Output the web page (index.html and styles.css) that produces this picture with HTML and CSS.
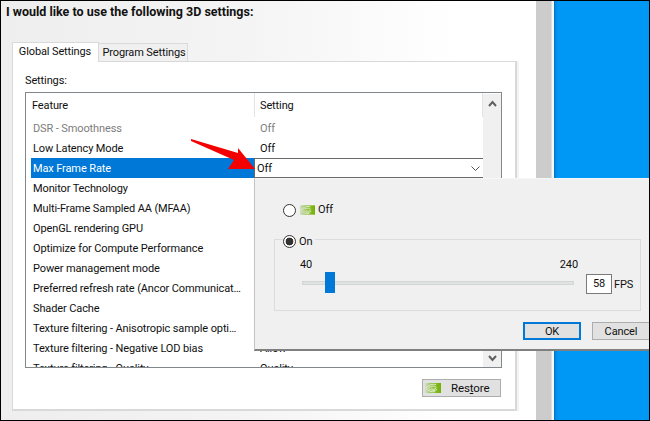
FILE: index.html
```html
<!DOCTYPE html>
<html lang="en">
<head>
<meta charset="utf-8">
<title>Manage 3D settings</title>
<link rel="stylesheet" href="styles.css">
</head>
<body>
<svg class="defs" width="0" height="0" aria-hidden="true">
  <defs>
    <linearGradient id="nv" x1="0" x2="1" y1="0" y2="0">
      <stop offset="0" stop-color="#d5dccb"/>
      <stop offset="0.35" stop-color="#9cc45a"/>
      <stop offset="1" stop-color="#74b000"/>
    </linearGradient>
    <symbol id="nvidia" viewBox="0 0 16 10">
      <rect width="16" height="10" fill="url(#nv)"/>
      <path d="M1 5.2C3.5 1.6 8 .8 11 1.6M3 5.4C5 3 8.5 2.6 10.4 3.6C11.6 4.4 10.8 6 9 6.3C7.6 6.5 6.4 5.8 6.6 4.8M1 5.4C3 8 6.5 9.4 10 8.6M4 5.8C6 7.8 10 8 12 6.4" fill="none" stroke="#e4efcf" stroke-width=".9"/>
    </symbol>
  </defs>
</svg>
<div class="stage">
  <main class="window">
    <h1 class="heading">I would like to use the following 3D settings:</h1>
    <div class="tabs">
      <div class="tab tab-active">Global Settings</div>
      <div class="tab">Program Settings</div>
    </div>
    <section class="panel">
      <div class="panel-label">Settings:</div>
      <div class="list">
        <div class="list-main">
          <div class="list-head">
            <div class="head-feature">Feature</div>
            <div class="head-setting">Setting</div>
          </div>
          <div class="rows">
            <div class="row row-muted"><span class="cell-f">DSR - Smoothness</span><span class="cell-s">Off</span></div>
            <div class="row"><span class="cell-f">Low Latency Mode</span><span class="cell-s">Off</span></div>
            <div class="row row-selected"><span class="cell-f">Max Frame Rate</span>
              <span class="combo"><span class="combo-value">Off</span>
                <svg class="combo-arrow" width="9" height="5" viewBox="0 0 9 5"><path d="M.5.5 4.500 4.500 8.500.5" fill="none" stroke="#555" stroke-width="1"/></svg>
              </span>
            </div>
            <div class="row"><span class="cell-f">Monitor Technology</span></div>
            <div class="row"><span class="cell-f">Multi-Frame Sampled AA (MFAA)</span></div>
            <div class="row"><span class="cell-f">OpenGL rendering GPU</span></div>
            <div class="row"><span class="cell-f">Optimize for Compute Performance</span></div>
            <div class="row"><span class="cell-f">Power management mode</span></div>
            <div class="row"><span class="cell-f">Preferred refresh rate (Ancor Communicat…</span></div>
            <div class="row"><span class="cell-f">Shader Cache</span></div>
            <div class="row"><span class="cell-f">Texture filtering - Anisotropic sample opti…</span></div>
            <div class="row"><span class="cell-f">Texture filtering - Negative LOD bias</span><span class="cell-s">Allow</span></div>
            <div class="row"><span class="cell-f">Texture filtering - Quality</span><span class="cell-s">Quality</span></div>
          </div>
        </div>
        <div class="scrollbar">
          <svg width="9" height="7" viewBox="0 0 9 7"><path d="M1 6 4.500 2 8 6" fill="none" stroke="#606060" stroke-width="2"/></svg>
          <svg width="9" height="7" viewBox="0 0 9 7"><path d="M1 1 4.500 5 8 1" fill="none" stroke="#606060" stroke-width="2"/></svg>
        </div>
      </div>
      <div class="panel-actions">
        <button class="btn btn-restore" type="button">
          <svg class="logo" width="16" height="10"><use href="#nvidia"/></svg>
          <span class="restore-text">Res<u>t</u>ore</span>
        </button>
      </div>
    </section>
  </main>
  <div class="scroll-strip"></div>
  <div class="desktop"></div>

  <div class="popup">
    <div class="radio-line">
      <span class="radio"></span>
      <svg class="logo" width="15" height="10"><use href="#nvidia"/></svg>
      <span>Off</span>
    </div>
    <div class="group">
      <div class="legend"><span class="radio radio-on"></span><span>On</span></div>
      <div class="scale"><span>40</span><span>240</span></div>
      <div class="slider-row">
        <div class="track"><span class="thumb"></span></div>
        <div class="fps-box">58</div>
        <span class="fps-label">FPS</span>
      </div>
    </div>
    <div class="popup-actions">
      <button class="btn btn-ok" type="button">OK</button>
      <button class="btn btn-cancel" type="button">Cancel</button>
    </div>
  </div>

  <svg class="arrow" width="70" height="34" viewBox="0 0 70 34">
    <path d="M2 1 49 15 49 10 66 31 39 31 45 22 2 3Z" fill="#f40000"/>
  </svg>
</div>
</body>
</html>
```

FILE: styles.css
```css
* { box-sizing: border-box; }
html, body { margin: 0; padding: 0; }
body { width: 650px; height: 421px; overflow: hidden; background: #000; }
.defs { position: absolute; }
.stage {
  position: relative;
  width: 650px;
  height: 421px;
  border: 1px solid #000;
  display: flex;
  overflow: hidden;
  font: 11px/16px Roboto, "Noto Sans", sans-serif;
  letter-spacing: -0.12px;
  color: #101010;
  background: #fff;
}
.window {
  width: 535px;
  display: flex;
  flex-direction: column;
  padding-left: 11px;
  background: linear-gradient(90deg, #eeeeee 0, #f4f4f4 45%, #ffffff 85%);
}
.heading {
  margin: 0;
  height: 40px;
  margin-left: -6px;
  padding-top: 3px;
  font: 700 12.5px/16px Roboto, "Noto Sans", sans-serif;
  letter-spacing: 0;
  color: #111;
}
.tabs { display: flex; align-items: flex-end; height: 20px; }
.tab {
  height: 18px;
  width: 90px;
  padding-left: 2px;
  background: #f0f0f0;
  border: 1px solid #d9d9d9;
  border-bottom: 0;
  line-height: 17px;
  text-align: center;
  margin-left: -1px;
  white-space: nowrap;
}
.tab-active {
  width: 87px;
  height: 20px;
  margin-left: 0;
  padding: 0 1px 0 0;
  background: #fff;
  position: relative;
  z-index: 1;
  margin-bottom: -1px;
}
.panel {
  width: 505px;
  height: 350px;
  background: #fff;
  border: 1px solid #d9d9d9;
  border-width: 1px 2px 2px 1px;
  box-shadow: 2px 0 0 #f3f3f3;
  padding: 10px 13px 0 12px;
}
.panel-label { height: 20px; line-height: 18px; }
.list {
  height: 276px;
  border: 1px solid #82878c;
  display: flex;
  background: #fff;
  overflow: hidden;
}
.list-main { flex: 1; min-width: 0; }
.list-head { display: flex; height: 25px; padding-left: 5px; line-height: 25px; }
.head-feature { width: 223px; padding-left: 1px; height: 24px; }
.head-setting {
  flex: 1;
  height: 24px;
  padding-left: 5px;
  border-left: 1px solid #e3e3e3;
  border-right: 1px solid #e3e3e3;
}
.rows { padding-left: 5px; }
.row { display: flex; height: 20px; line-height: 22px; white-space: nowrap; }
.cell-f { width: 223px; height: 20px; padding-left: 2px; }
.cell-s { padding-left: 6px; }
.row-muted { color: #7d7d7d; }
.row-selected .cell-f { background: #0078d7; color: #fff; }
.combo {
  flex: 1;
  height: 20px;
  padding: 0 3px 0 2px;
  border: 1px solid #696969;
  border-right: 0;
  display: flex;
  justify-content: space-between;
  align-items: center;
  background: #fff;
}
.combo-value { line-height: 20px; height: 18px; }
.combo-arrow { flex: none; }
.scrollbar {
  width: 18px;
  margin: 1px 0 0;
  background: #f0f0f0;
  display: flex;
  flex-direction: column;
  justify-content: space-between;
  align-items: center;
  padding: 6px 0 5px;
}
.panel-actions { display: flex; justify-content: flex-end; margin-top: 11px; padding-right: 1px; }
.btn {
  font: inherit;
  letter-spacing: inherit;
  color: inherit;
  height: 18px;
  padding: 0;
  background: #e1e1e1;
  border: 1px solid #adadad;
  line-height: 15px;
}
.btn-restore {
  width: 79px;
  display: flex;
  align-items: center;
  padding-left: 2px;
}
.logo { flex: none; display: block; }
.restore-text { margin-left: 10px; font-size: 11.5px; }
.scroll-strip {
  width: 18px;
  height: 100%;
  border-left: 15px solid #cccccc;
  background: linear-gradient(90deg, #dedede 0, #dedede 1px, #f7f7f7 1px);
}
.desktop {
  flex: 1;
  background: linear-gradient(90deg, #0072c0 0, #0090ea 2px, #0098f5 5px);
}
.popup {
  position: absolute;
  left: 253px;
  top: 177px;
  right: 0;
  height: 173px;
  background: #f0f0f0;
  border-top: 1px solid #f7f7f7;
  border-left: 1px solid #c4c4c4;
  border-bottom: 2px solid #808080;
  padding: 21px 0 0 19px;
}
.radio-line {
  display: flex;
  align-items: center;
  height: 20px;
  padding-left: 9px;
}
.radio-line .logo { margin: 0 3px 0 4px; }
.radio {
  width: 13px;
  height: 13px;
  border: 1px solid #333;
  border-radius: 50%;
  background: #fff;
  flex: none;
}
.radio-on {
  background: radial-gradient(circle, #333 0 3.6px, #fff 4.2px);
  margin-right: 3px;
}
.group {
  width: 367px;
  height: 72px;
  margin-top: 19px;
  border: 1px solid #dcdcdc;
}
.legend {
  display: flex;
  align-items: center;
  width: 32px;
  height: 17px;
  margin: -7px 0 0 8px;
  background: #f0f0f0;
}
.scale {
  display: flex;
  justify-content: space-between;
  width: 278px;
  height: 14px;
  margin: 7px 0 0 25px;
  line-height: 16px;
}
.slider-row {
  display: flex;
  align-items: center;
  height: 22px;
  margin-top: 1px;
  padding-left: 27px;
}
.track {
  position: relative;
  width: 272px;
  height: 4px;
  background: #dfe3e2;
  border: 1px solid #d4d6d5;
}
.thumb {
  position: absolute;
  left: 22px;
  top: -10px;
  width: 10px;
  height: 21px;
  background: #0078d7;
}
.fps-box {
  width: 26px;
  height: 20px;
  margin: 2px 0 0 12px;
  border: 1px solid #7a7a7a;
  background: #fff;
  line-height: 18px;
  text-align: center;
}
.fps-label { margin: 4px 0 0 2px; }
.popup-actions {
  display: flex;
  gap: 11px;
  margin-top: 11px;
  padding-left: 249px;
}
.btn-ok { width: 58px; border: 2px solid #0078d7; line-height: 13px; }
.btn-cancel { width: 57px; border-right: 0; }
.arrow { position: absolute; left: 188px; top: 137px; }
```
